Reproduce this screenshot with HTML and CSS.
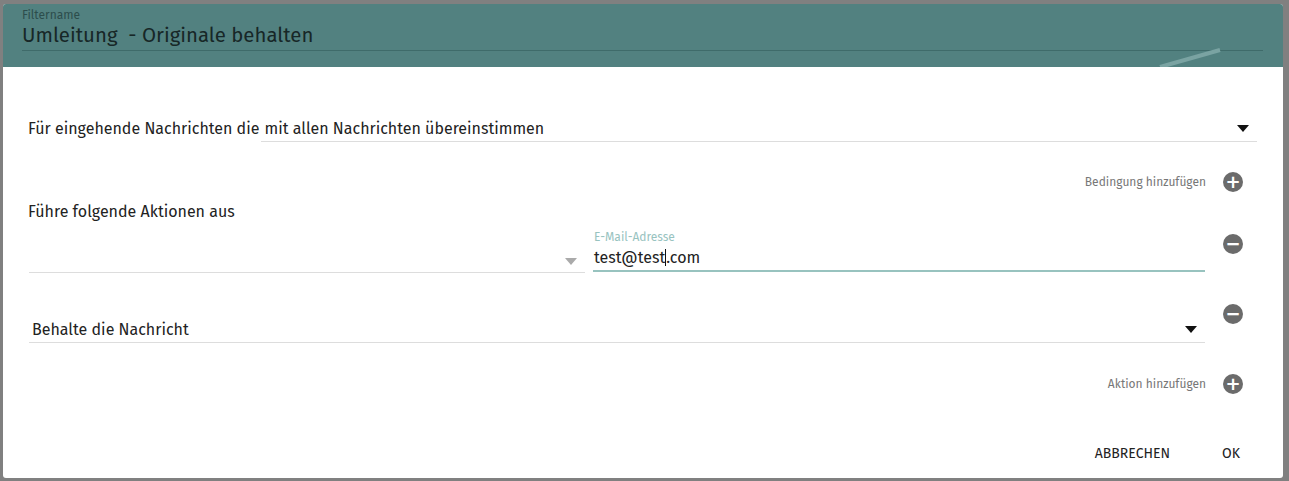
FILE: index.html
```html
<!DOCTYPE html>
<html lang="de">
<head>
    <meta charset="UTF-8">
    <meta name="viewport" content="width=device-width, initial-scale=1.0">
    <title>Filter bearbeiten</title>
    <link rel="stylesheet" href="styles.css">
</head>
<body>
    <div class="dialog">
        <header class="dialog-head">
            <div class="head-field">
                <label>Filtername</label>
                <div class="head-value">Umleitung &nbsp;- Originale behalten</div>
            </div>
            <svg class="head-deco" width="80" height="20" viewBox="0 0 80 20">
                <line x1="2" y1="20" x2="62" y2="3" stroke="#7aa3a2" stroke-width="4"/>
            </svg>
        </header>

        <div class="dialog-body">
            <div class="row condition">
                <span class="row-label">Für eingehende Nachrichten die</span>
                <div class="select grow">
                    <span>mit allen Nachrichten übereinstimmen</span>
                    <span class="caret"></span>
                </div>
            </div>

            <div class="add-line add-condition">
                <span>Bedingung hinzufügen</span>
                <span class="round-btn">+</span>
            </div>

            <div class="section-label">Führe folgende Aktionen aus</div>

            <div class="action">
                <div class="select action-type">
                    <span></span>
                    <span class="caret light"></span>
                </div>
                <div class="text-field">
                    <label>E-Mail-Adresse</label>
                    <div class="text-value">test@test<span class="cursor"></span>.com</div>
                </div>
                <span class="round-btn minus">&minus;</span>
            </div>

            <div class="action second">
                <div class="select grow">
                    <span>Behalte die Nachricht</span>
                    <span class="caret"></span>
                </div>
                <span class="round-btn minus">&minus;</span>
            </div>

            <div class="add-line add-action">
                <span>Aktion hinzufügen</span>
                <span class="round-btn">+</span>
            </div>

            <div class="buttons">
                <button>ABBRECHEN</button>
                <button class="ok">OK</button>
            </div>
        </div>
    </div>
</body>
</html>
```

FILE: styles.css
```css
body {
    margin: 0;
    background: #808080;
    font-family: "Fira Sans", "Noto Sans", Arial, sans-serif;
    color: #222;
}
.dialog {
    margin: 4px 6px 3px 3px;
    height: 474px;
    background: white;
    border-radius: 3px;
    overflow: hidden;
    display: flex;
    flex-direction: column;
}
.dialog-head {
    position: relative;
    background: #528180;
    height: 63px;
    padding: 0 20px 0 19px;
}
.head-field {
    padding-top: 5px;
    border-bottom: 1px solid #3f6b6a;
}
.head-field label {
    display: block;
    font-size: 12px;
    color: #2c4d4c;
    line-height: 12px;
}
.head-value {
    font-size: 20.4px;
    line-height: 28px;
    color: #172727;
    padding-bottom: 1px;
}
.head-deco {
    position: absolute;
    right: 45px;
    bottom: 0;
}
.dialog-body {
    padding: 0 26px 0 25px;
    flex: 1;
    display: flex;
    flex-direction: column;
}
.row {
    display: flex;
    align-items: flex-end;
}
.condition {
    margin-top: 48px;
}
.row-label {
    font-size: 16px;
    padding-bottom: 4px;
    margin-right: 2px;
}
.select {
    display: flex;
    align-items: center;
    justify-content: space-between;
    border-bottom: 1px solid #ddd;
    height: 27px;
    font-size: 16px;
    padding: 0 8px 0 3px;
    box-sizing: border-box;
}
.grow {
    flex: 1;
}
.caret {
    width: 0;
    height: 0;
    border-left: 6px solid transparent;
    border-right: 6px solid transparent;
    border-top: 7px solid #111;
}
.caret.light {
    border-top-color: #aaa;
    margin-top: 6px;
}
.add-line {
    display: flex;
    align-items: center;
    justify-content: flex-end;
    gap: 17px;
    font-size: 12px;
    color: #777;
    margin-right: 14px;
}
.add-condition {
    margin-top: 30px;
}
.round-btn {
    width: 20px;
    height: 20px;
    border-radius: 50%;
    background: #6b6b6b;
    color: white;
    font-weight: bold;
    font-size: 18px;
    line-height: 20px;
    text-align: center;
    font-family: "DejaVu Sans", sans-serif;
}
.section-label {
    font-size: 16px;
    margin-top: 10px;
}
.action {
    display: flex;
    align-items: flex-end;
    margin-top: 10px;
    margin-left: 1px;
    margin-right: 14px;
    gap: 8px;
}
.action .round-btn {
    align-self: flex-start;
    margin-left: 10px;
    margin-top: 3px;
}
.action-type {
    width: 556px;
    height: 28px;
}
.text-field {
    flex: 1;
    border-bottom: 2px solid #98c3bf;
    margin-bottom: 1px;
}
.text-field label {
    display: block;
    font-size: 12px;
    color: #98c3bf;
    line-height: 13px;
    padding-left: 1px;
    margin-bottom: 3px;
}
.text-value {
    font-size: 16px;
    line-height: 22px;
    padding: 0 0 1px 1px;
}
.cursor {
    display: inline-block;
    width: 1px;
    height: 17px;
    background: #111;
    vertical-align: -3px;
}
.second {
    margin-top: 43px;
    gap: 0;
}
.second .round-btn {
    margin-top: -12px;
    margin-left: 18px;
}
.add-action {
    margin-top: 31px;
}
.buttons {
    display: flex;
    justify-content: flex-end;
    margin-top: 45px;
    margin-right: 9px;
    gap: 36px;
}
.buttons button {
    background: none;
    border: none;
    font-family: inherit;
    font-size: 14px;
    color: #222;
    padding: 6px 8px;
}
```
